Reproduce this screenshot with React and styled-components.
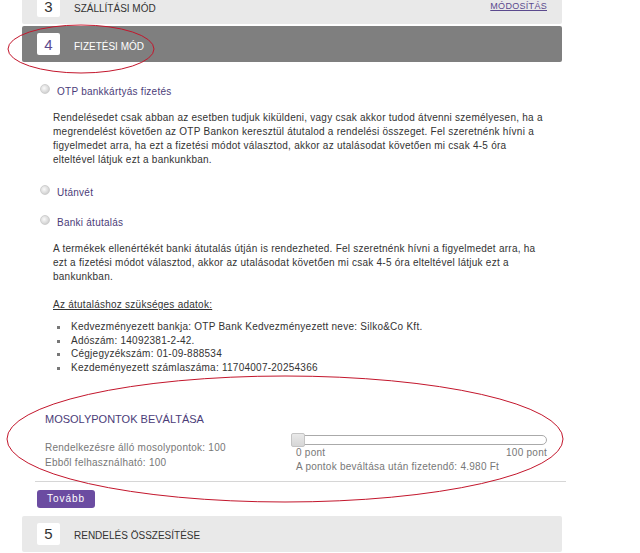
import React from 'react'
import styled, { createGlobalStyle } from 'styled-components';

const Global = createGlobalStyle`
    body {
        margin: 0;
        background: #fff;
        font-family: "Liberation Sans", Arial, sans-serif;
    }
`;

const Page = styled.div`
    position: relative;
    width: 640px;
    height: 553px;
    overflow: hidden;
`;

const Column = styled.div`
    width: 540px;
    margin: -12px 0 0 22px;
    display: flex;
    flex-direction: column;
    gap: 2px;
`;

const StepHeader = styled.div`
    height: 36px;
    display: flex;
    align-items: center;
    padding: 0 15px;
    border-radius: 2px;
    background: ${p => p.$active ? '#7f7f7f' : '#e9e9e9'};
    color: ${p => p.$active ? '#fff' : '#333'};
`;

const StepNum = styled.div`
    width: 23px;
    height: 22px;
    background: #fff;
    border-radius: 2px;
    display: flex;
    align-items: center;
    justify-content: center;
    font-size: 15px;
    color: ${p => p.$active ? '#5b4a8e' : '#333'};
    margin-right: 14px;
`;

const StepTitle = styled.div`
    flex: 1;
    font-size: 10px;
    text-transform: uppercase;
    padding-top: 4px;
`;

const EditLink = styled.a`
    font-size: 9px;
    color: #5b4a8e;
    text-decoration: underline;
    letter-spacing: 0.3px;
    align-self: flex-start;
    margin: 13px 0 0;
`;

const Body = styled.div`
    padding: 20px 0 0 31px;
    font-size: 10px;
    letter-spacing: 0.25px;
    color: #333;
`;

const Option = styled.label`
    display: flex;
    align-items: center;
    margin-left: -13px;
    color: #4b3c78;
    font-size: 10px;
    height: 14px;
    margin-bottom: ${p => p.$gap || 0}px;
`;

const Radio = styled.span`
    width: 8px;
    height: 8px;
    border-radius: 50%;
    background: radial-gradient(circle at 40% 40%, #fafafa 0%, #d9d9d9 60%, #bdbdbd 100%);
    border: 1px solid #cfcfcf;
    margin: -4px 7px 0 0;
`;

const Para = styled.p`
    margin: 0 0 ${p => p.$gap || 0}px;
    line-height: 14px;
    width: 490px;
`;

const DataTitle = styled.div`
    text-decoration: underline;
    line-height: 14px;
    margin-bottom: 8px;
`;

const List = styled.ul`
    margin: 0;
    padding: 0 0 0 18px;
    list-style: none;
    line-height: 13.7px;
`;

const Item = styled.li`
    position: relative;
    &::before {
        content: '';
        position: absolute;
        left: -14px;
        top: 6px;
        width: 3px;
        height: 3px;
        background: #777;
    }
`;

const Points = styled.div`
    margin: 38px 0 0 -18px;
    width: 521px;
    border-bottom: 1px solid #d6d6d6;
    padding: 0 0 7px 10px;
`;

const PointsTitle = styled.div`
    font-size: 11px;
    color: #4b3c78;
    text-transform: uppercase;
    margin-bottom: 9px;
    letter-spacing: 0;
`;

const PointsRow = styled.div`
    display: flex;
`;

const PointsInfo = styled.div`
    width: 246px;
    color: #777;
    line-height: 15px;
    padding-top: 6px;
`;

const SliderBox = styled.div`
    width: 256px;
    color: #777;
`;

const Track = styled.div`
    position: relative;
    height: 8px;
    border: 1px solid #aaa;
    border-radius: 5px;
    background: #fff;
    margin-top: 1px;
`;

const Handle = styled.span`
    position: absolute;
    left: -1px;
    top: -3px;
    width: 12px;
    height: 12px;
    border: 1px solid #c4c4c4;
    border-radius: 2px;
    background: linear-gradient(#e9e9e9, #d6d6d6);
`;

const Scale = styled.div`
    display: flex;
    justify-content: space-between;
    padding-left: 5px;
    line-height: 14px;
    margin-top: 1px;
`;

const Payable = styled.div`
    padding-left: 5px;
    line-height: 14px;
`;

const Button = styled.button`
    display: block;
    margin: 8px 0 6px -16px;
    width: 58px;
    height: 18px;
    border: none;
    border-radius: 3px;
    background: #6b4ca1;
    color: #fff;
    font-family: "Liberation Sans", Arial, sans-serif;
    font-size: 10px;
    letter-spacing: 1px;
    padding: 0;
`;

const Marks = styled.svg`
    position: absolute;
    left: 0;
    top: 0;
    pointer-events: none;
`;

const App = () => {
    return (
        <Page>
            <Global />
            <Column>
                <StepHeader>
                    <StepNum>3</StepNum>
                    <StepTitle>Szállítási mód</StepTitle>
                    <EditLink>MÓDOSÍTÁS</EditLink>
                </StepHeader>
                <StepHeader $active>
                    <StepNum $active>4</StepNum>
                    <StepTitle>Fizetési mód</StepTitle>
                </StepHeader>
                <Body>
                    <Option $gap={13}><Radio />OTP bankkártyás fizetés</Option>
                    <Para $gap={18}>
                        Rendelésedet csak abban az esetben tudjuk kiküldeni, vagy csak akkor tudod átvenni személyesen, ha a
                        megrendelést követően az OTP Bankon keresztül átutalod a rendelési összeget. Fel szeretnénk hívni a
                        figyelmedet arra, ha ezt a fizetési módot választod, akkor az utalásodat követően mi csak 4-5 óra
                        elteltével látjuk ezt a bankunkban.
                    </Para>
                    <Option $gap={16}><Radio />Utánvét</Option>
                    <Option $gap={13}><Radio />Banki átutalás</Option>
                    <Para $gap={14}>
                        A termékek ellenértékét banki átutalás útján is rendezheted. Fel szeretnénk hívni a figyelmedet arra, ha
                        ezt a fizetési módot választod, akkor az utalásodat követően mi csak 4-5 óra elteltével látjuk ezt a
                        bankunkban.
                    </Para>
                    <DataTitle>Az átutaláshoz szükséges adatok:</DataTitle>
                    <List>
                        <Item>Kedvezményezett bankja: OTP Bank Kedvezményezett neve: Silko&amp;Co Kft.</Item>
                        <Item>Adószám: 14092381-2-42.</Item>
                        <Item>Cégjegyzékszám: 01-09-888534</Item>
                        <Item>Kezdeményezett számlaszáma: 11704007-20254366</Item>
                    </List>
                    <Points>
                        <PointsTitle>Mosolypontok beváltása</PointsTitle>
                        <PointsRow>
                            <PointsInfo>
                                <div>Rendelkezésre álló mosolypontok: 100</div>
                                <div>Ebből felhasználható: 100</div>
                            </PointsInfo>
                            <SliderBox>
                                <Track><Handle /></Track>
                                <Scale><span>0 pont</span><span>100 pont</span></Scale>
                                <Payable>A pontok beváltása után fizetendő: 4.980 Ft</Payable>
                            </SliderBox>
                        </PointsRow>
                    </Points>
                    <Button>Tovább</Button>
                </Body>
                <StepHeader>
                    <StepNum>5</StepNum>
                    <StepTitle>Rendelés összesítése</StepTitle>
                </StepHeader>
            </Column>
            <Marks width="640" height="553">
                <ellipse cx="81" cy="49" rx="73" ry="24" fill="none" stroke="#c3162c" strokeWidth="1" />
                <ellipse cx="285" cy="439" rx="278" ry="63" fill="none" stroke="#c3162c" strokeWidth="1" />
            </Marks>
        </Page>
    );
};

export default App
